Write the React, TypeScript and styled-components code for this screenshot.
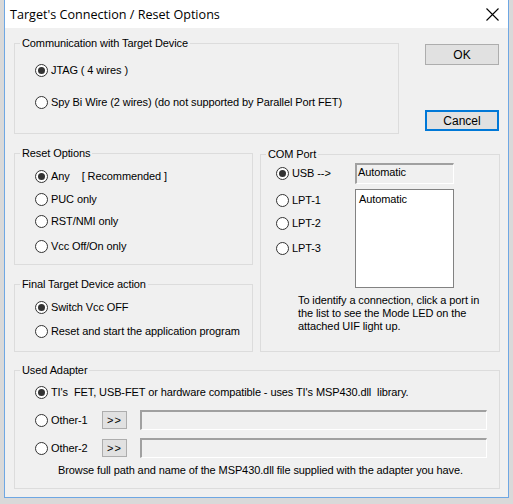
import React from 'react';
import styled, { createGlobalStyle } from 'styled-components';

const GlobalStyle = createGlobalStyle`
  html, body {
    margin: 0;
    padding: 0;
    background: #d9d9d9;
  }
  body {
    width: 513px;
    height: 504px;
    overflow: hidden;
  }
  * {
    box-sizing: border-box;
  }
`;

const Screen = styled.div`
  width: 513px;
  height: 504px;
  padding-left: 4px;
`;

const Window = styled.div`
  width: 505px;
  height: 498px;
  border: 1px solid #6ea7e3;
  border-top: none;
  background: #f0f0f0;
  display: flex;
  flex-direction: column;
  font-family: 'Liberation Sans', Arial, sans-serif;
  font-size: 11px;
  letter-spacing: -0.1px;
  color: #000;
`;

const TitleBar = styled.div`
  height: 28px;
  flex-shrink: 0;
  background: #fff;
  display: flex;
  align-items: center;
  justify-content: space-between;
  padding: 0 9px 0 5px;
  font-family: 'Open Sans', 'Noto Sans', sans-serif;
  font-size: 12.6px;
  letter-spacing: 0;
`;

const Body = styled.div`
  padding: 15px 0 0 9px;
  display: flex;
  flex-direction: column;
`;

const Row = styled.div<{ $mt?: number; $gap?: number }>`
  display: flex;
  align-items: flex-start;
  margin-top: ${(p) => p.$mt ?? 0}px;
  gap: ${(p) => p.$gap ?? 0}px;
`;

const Column = styled.div<{ $w: number }>`
  width: ${(p) => p.$w}px;
  display: flex;
  flex-direction: column;
`;

const GroupBox = styled.div<{ $w: number; $h: number; $mt?: number; $pl?: number }>`
  position: relative;
  width: ${(p) => p.$w}px;
  height: ${(p) => p.$h}px;
  margin-top: ${(p) => p.$mt ?? 0}px;
  padding-left: ${(p) => p.$pl ?? 20}px;
  border: 1px solid #dcdcdc;
  display: flex;
  flex-direction: column;
  align-items: flex-start;
`;

const Legend = styled.span`
  position: absolute;
  top: -8px;
  left: 5px;
  padding: 0 2px;
  line-height: 15px;
  background: #f0f0f0;
  white-space: nowrap;
`;

const Option = styled.label<{ $mt?: number }>`
  display: flex;
  align-items: center;
  height: 16px;
  margin-top: ${(p) => p.$mt ?? 0}px;
  white-space: pre;
  flex-shrink: 0;
`;

const Circle = styled.span<{ $on?: boolean }>`
  width: 13px;
  height: 13px;
  border: 1px solid #333;
  border-radius: 50%;
  background: #fff;
  margin-right: 3px;
  display: flex;
  align-items: center;
  justify-content: center;
  flex-shrink: 0;
  &::after {
    content: '';
    width: 7px;
    height: 7px;
    border-radius: 50%;
    background: ${(p) => (p.$on ? '#333' : 'transparent')};
  }
`;

const Spacer = styled.span<{ $w: number }>`
  display: inline-block;
  width: ${(p) => p.$w}px;
`;

const ButtonCol = styled.div`
  margin-left: 26px;
  padding-top: 1px;
  width: 74px;
  display: flex;
  flex-direction: column;
  gap: 45px;
`;

const DialogButton = styled.button<{ $default?: boolean }>`
  width: 74px;
  height: 21px;
  padding: 0;
  background: #e1e1e1;
  border: ${(p) => (p.$default ? '2px solid #0078d7' : '1px solid #adadad')};
  font: inherit;
  font-size: 12px;
  color: #000;
`;

const ReadOnlyBox = styled.div`
  width: 99px;
  height: 21px;
  margin-top: 8px;
  background: #f0f0f0;
  border-top: 2px solid #a0a0a0;
  border-left: 2px solid #a0a0a0;
  border-right: 1px solid #fff;
  border-bottom: 1px solid #fff;
  padding: 0 0 0 1px;
  line-height: 15px;
`;

const ListBox = styled.div`
  width: 99px;
  height: 99px;
  margin-top: 5px;
  background: #fff;
  border: 1px solid #828282;
  padding: 2px 0 0 3px;
  line-height: 15px;
`;

const HelpText = styled.p<{ $ml: number; $mt: number }>`
  margin: ${(p) => p.$mt}px 0 0 ${(p) => p.$ml}px;
  line-height: 13px;
  white-space: nowrap;
`;

const AdapterRow = styled.div<{ $mt: number }>`
  display: flex;
  align-items: center;
  height: 20px;
  margin-top: ${(p) => p.$mt}px;
`;

const OptionSlot = styled.div`
  width: 67px;
  display: flex;
  align-items: center;
`;

const BrowseButton = styled.button`
  width: 25px;
  height: 18px;
  padding: 0;
  background: #e1e1e1;
  border: 1px solid #adadad;
  font: inherit;
  font-size: 11px;
  letter-spacing: 1px;
  color: #000;
  margin-right: 13px;
`;

const PathField = styled.div`
  width: 347px;
  height: 20px;
  background: #f0f0f0;
  border-top: 2px solid #a0a0a0;
  border-left: 2px solid #a0a0a0;
  border-right: 1px solid #fff;
  border-bottom: 1px solid #fff;
`;

const Radio = ({ label, on, mt }: { label: React.ReactNode; on?: boolean; mt?: number }) => (
  <Option $mt={mt}>
    <Circle $on={on} />
    {label}
  </Option>
);

const CloseIcon = () => (
  <svg width="13" height="13" viewBox="0 0 13 13">
    <path d="M0.5 0.5 L12.5 12.5 M12.5 0.5 L0.5 12.5" stroke="#000" strokeWidth="1.1" />
  </svg>
);

const App = () => {
  return (
    <Screen>
      <GlobalStyle />
      <Window>
        <TitleBar>
          <span>Target's Connection / Reset Options</span>
          <CloseIcon />
        </TitleBar>
        <Body>
          <Row>
            <GroupBox $w={385} $h={91}>
              <Legend>Communication with Target Device</Legend>
              <Radio on mt={18} label="JTAG ( 4 wires )" />
              <Radio mt={16} label="Spy Bi Wire (2 wires) (do not supported by Parallel Port FET)" />
            </GroupBox>
            <ButtonCol>
              <DialogButton>OK</DialogButton>
              <DialogButton $default>Cancel</DialogButton>
            </ButtonCol>
          </Row>

          <Row $mt={19} $gap={7}>
            <Column $w={239}>
              <GroupBox $w={239} $h={112}>
                <Legend>Reset Options</Legend>
                <Radio
                  on
                  mt={14}
                  label={
                    <>
                      Any<Spacer $w={12} />[ Recommended ]
                    </>
                  }
                />
                <Radio mt={7} label="PUC only" />
                <Radio mt={6} label="RST/NMI only" />
                <Radio mt={9} label="Vcc Off/On only" />
              </GroupBox>
              <GroupBox $w={239} $h={68} $mt={19}>
                <Legend>Final Target Device action</Legend>
                <Radio on mt={14} label="Switch Vcc OFF" />
                <Radio mt={8} label="Reset and start the application program" />
              </GroupBox>
            </Column>

            <GroupBox $w={240} $h={198} $mt={1} $pl={15}>
              <Legend>COM Port</Legend>
              <Row>
                <Column $w={79}>
                  <Radio on mt={10} label="USB -->" />
                  <Radio mt={11} label="LPT-1" />
                  <Radio mt={7} label="LPT-2" />
                  <Radio mt={9} label="LPT-3" />
                </Column>
                <Column $w={99}>
                  <ReadOnlyBox>Automatic</ReadOnlyBox>
                  <ListBox>Automatic</ListBox>
                </Column>
              </Row>
              <HelpText $ml={22} $mt={6}>
                To identify a connection, click a port in
                <br />
                the list to see the Mode LED on the
                <br />
                attached UIF light up.
              </HelpText>
            </GroupBox>
          </Row>

          <GroupBox $w={486} $h={119} $mt={18}>
            <Legend>Used Adapter</Legend>
            <Radio on mt={13} label="TI's  FET, USB-FET or hardware compatible - uses TI's MSP430.dll  library." />
            <AdapterRow $mt={10}>
              <OptionSlot>
                <Radio label="Other-1" />
              </OptionSlot>
              <BrowseButton>&gt;&gt;</BrowseButton>
              <PathField />
            </AdapterRow>
            <AdapterRow $mt={8}>
              <OptionSlot>
                <Radio label="Other-2" />
              </OptionSlot>
              <BrowseButton>&gt;&gt;</BrowseButton>
              <PathField />
            </AdapterRow>
            <HelpText $ml={23} $mt={6}>
              Browse full path and name of the MSP430.dll file supplied with the adapter you have.
            </HelpText>
          </GroupBox>
        </Body>
      </Window>
    </Screen>
  );
};

export default App;
